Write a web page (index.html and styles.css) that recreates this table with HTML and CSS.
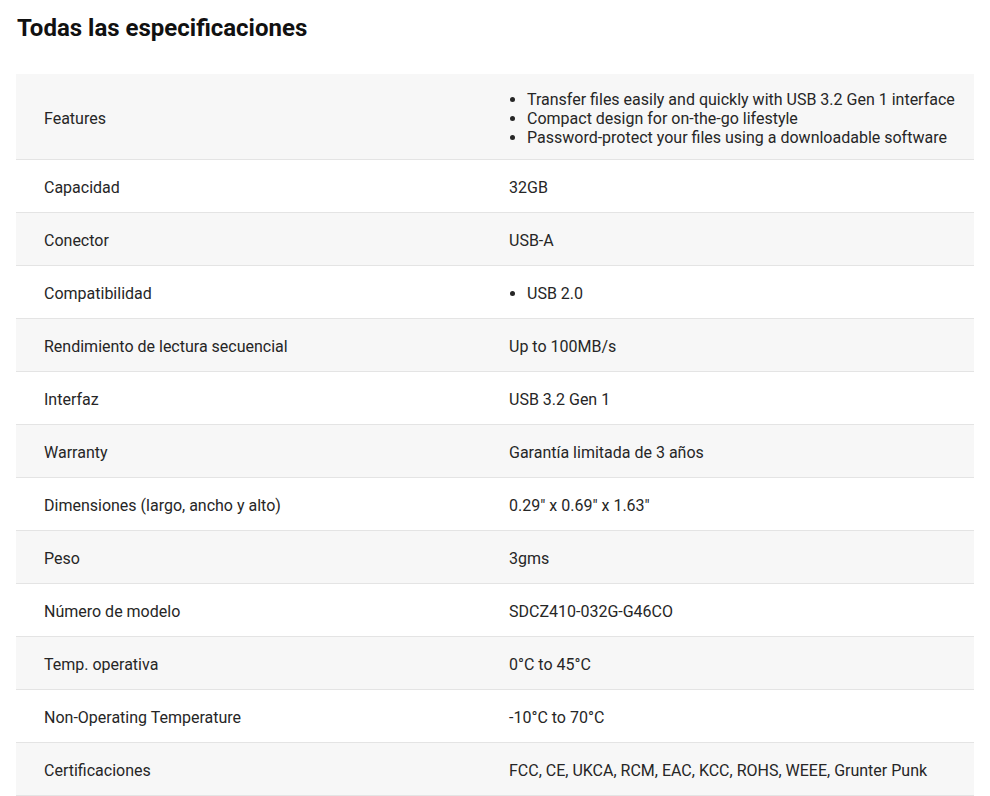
FILE: index.html
```html
<!DOCTYPE html>
<html lang="es">
<head>
<meta charset="utf-8">
<title>Todas las especificaciones</title>
<link rel="stylesheet" href="styles.css">
</head>
<body>
<section class="specs">
  <h2 class="specs-title">Todas las especificaciones</h2>
  <table class="spec-table">
    <colgroup>
      <col class="col-label">
      <col class="col-value">
    </colgroup>
    <tbody>
      <tr class="row-list">
        <td class="label">Features</td>
        <td class="value">
          <ul class="bullets">
            <li>Transfer files easily and quickly with USB 3.2 Gen 1 interface</li>
            <li>Compact design for on-the-go lifestyle</li>
            <li>Password-protect your files using a downloadable software</li>
          </ul>
        </td>
      </tr>
      <tr><td class="label">Capacidad</td><td class="value">32GB</td></tr>
      <tr><td class="label">Conector</td><td class="value">USB-A</td></tr>
      <tr>
        <td class="label">Compatibilidad</td>
        <td class="value"><ul class="bullets single"><li>USB 2.0</li></ul></td>
      </tr>
      <tr><td class="label">Rendimiento de lectura secuencial</td><td class="value">Up to 100MB/s</td></tr>
      <tr><td class="label">Interfaz</td><td class="value">USB 3.2 Gen 1</td></tr>
      <tr><td class="label">Warranty</td><td class="value">Garantía limitada de 3 años</td></tr>
      <tr><td class="label">Dimensiones (largo, ancho y alto)</td><td class="value">0.29" x 0.69" x 1.63"</td></tr>
      <tr><td class="label">Peso</td><td class="value">3gms</td></tr>
      <tr><td class="label">Número de modelo</td><td class="value">SDCZ410-032G-G46CO</td></tr>
      <tr><td class="label">Temp. operativa</td><td class="value">0°C to 45°C</td></tr>
      <tr><td class="label">Non-Operating Temperature</td><td class="value">-10°C to 70°C</td></tr>
      <tr><td class="label">Certificaciones</td><td class="value">FCC, CE, UKCA, RCM, EAC, KCC, ROHS, WEEE, Grunter Punk</td></tr>
    </tbody>
  </table>
</section>
</body>
</html>
```

FILE: styles.css
```css
html, body {
  margin: 0;
  padding: 0;
  background: #ffffff;
}

body {
  font-family: Roboto, "Liberation Sans", Arial, sans-serif;
  color: #262626;
}

.specs {
  padding: 14px 16px 0 16px;
}

.specs-title {
  margin: 0 0 32px 1px;
  font-size: 24px;
  line-height: 28px;
  font-weight: 700;
  color: #111111;
}

.spec-table {
  width: 958px;
  table-layout: fixed;
  border-collapse: collapse;
  font-size: 16px;
}

.col-label {
  width: 465px;
}

.spec-table tr {
  border-bottom: 1px solid #e4e4e4;
}

.spec-table tr:nth-child(odd) {
  background: #f7f7f7;
}

.spec-table tr:nth-child(even) {
  background: #ffffff;
}

.spec-table td {
  padding: 16px 28px 12px 28px;
  line-height: 24px;
  height: 24px;
  vertical-align: middle;
  text-align: left;
}

.spec-table td.value {
  padding-right: 8px;
  white-space: nowrap;
}

.bullets {
  margin: 0;
  padding: 0 0 0 18px;
  line-height: 19px;
}

.bullets.single {
  line-height: 24px;
}
```
